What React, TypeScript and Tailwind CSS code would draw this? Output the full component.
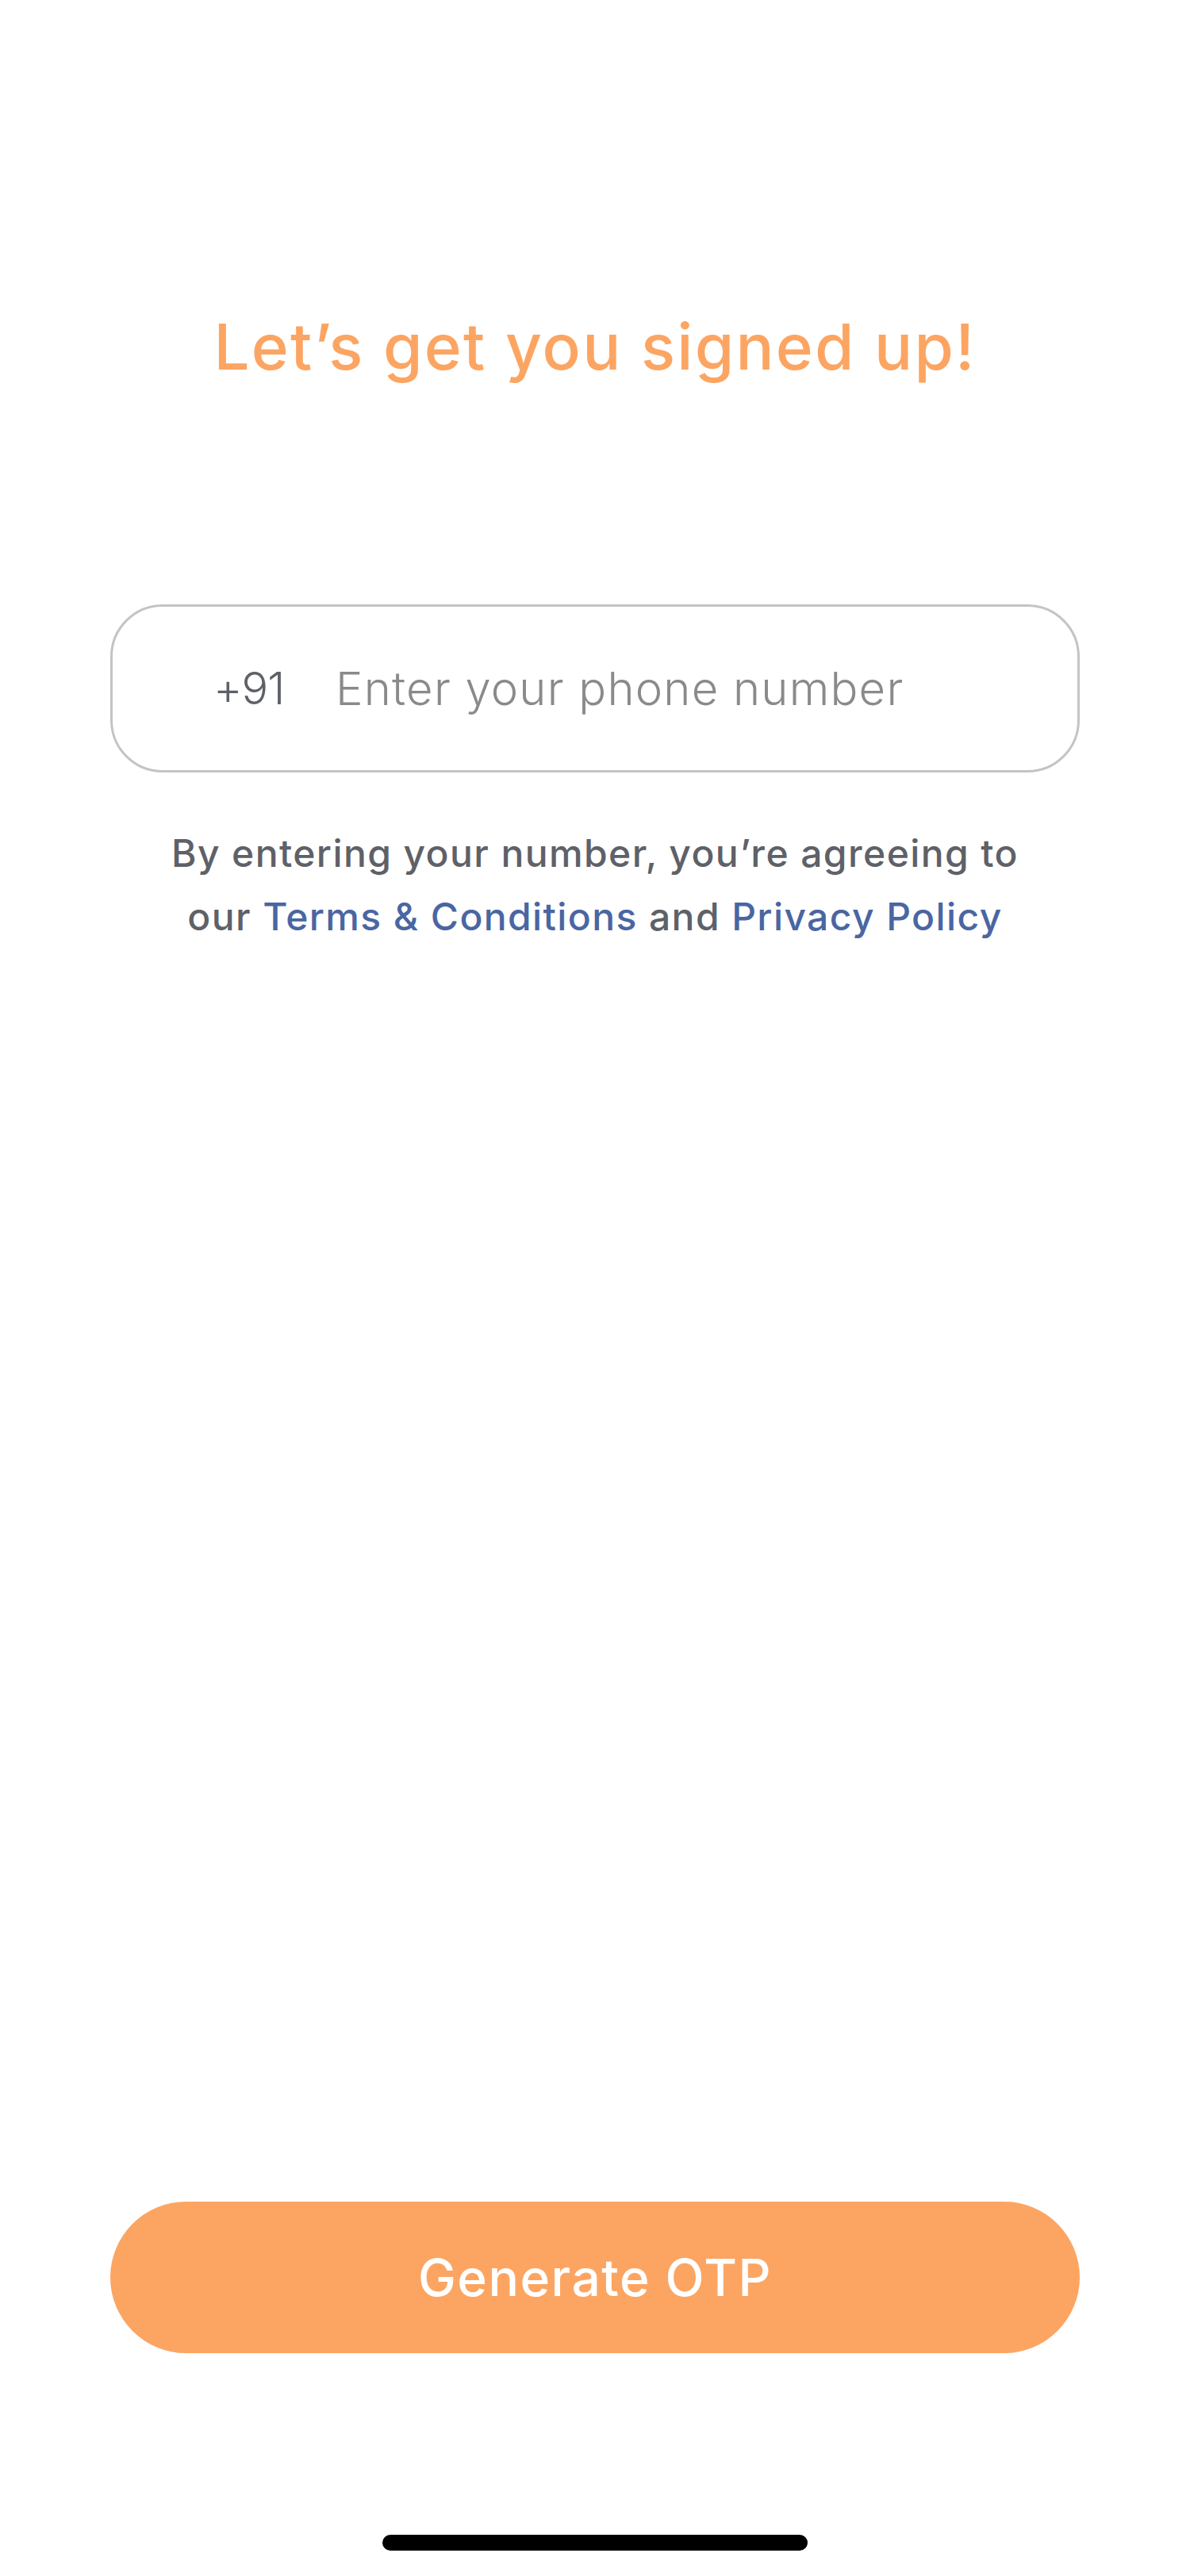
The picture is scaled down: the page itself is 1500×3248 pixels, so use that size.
export default function App() {
  return (
    <div
      className="relative flex h-[3248px] w-[1500px] flex-col bg-white"
      style={{ fontFamily: "Inter, 'Noto Sans', sans-serif" }}
    >
      {/* Heading */}
      <h1 className="pt-[397px] text-center text-[80px] font-medium leading-none tracking-[2.2px] text-[#fca562]">
        Let’s get you signed up!
      </h1>

      {/* Phone input */}
      <div className="mx-[139px] mt-[285px] flex h-[212px] items-center rounded-[66px] border-[3px] border-[#c4c4c4] pl-[127px]">
        <span className="w-[154px] text-[56px] font-light tracking-[-1px] text-[#5e6168]">+91</span>
        <input
          type="tel"
          placeholder="Enter your phone number"
          className="flex-1 bg-transparent text-[58px] font-light tracking-[1.2px] text-[#5e6168] outline-none placeholder:text-[#8a8a8a]"
        />
      </div>

      {/* Terms */}
      <p className="mt-[62px] text-center text-[48px] font-medium leading-[80px] tracking-[1.4px] text-[#5e6168]">
        By entering your number, you’re agreeing to
        <br />
        our <span className="text-[#4a66a2]">Terms &amp; Conditions</span> and{" "}
        <span className="text-[#4a66a2]">Privacy Policy</span>
      </p>

      <div className="flex-1" />

      {/* Action */}
      <button className="mx-[139px] flex h-[191px] items-center justify-center rounded-full bg-[#fca562] text-[64px] font-medium tracking-[1.5px] text-white">
        Generate OTP
      </button>

      {/* Home indicator */}
      <div className="mx-auto mb-[32px] mt-[229px] h-[20px] w-[536px] rounded-full bg-black" />
    </div>
  );
}
